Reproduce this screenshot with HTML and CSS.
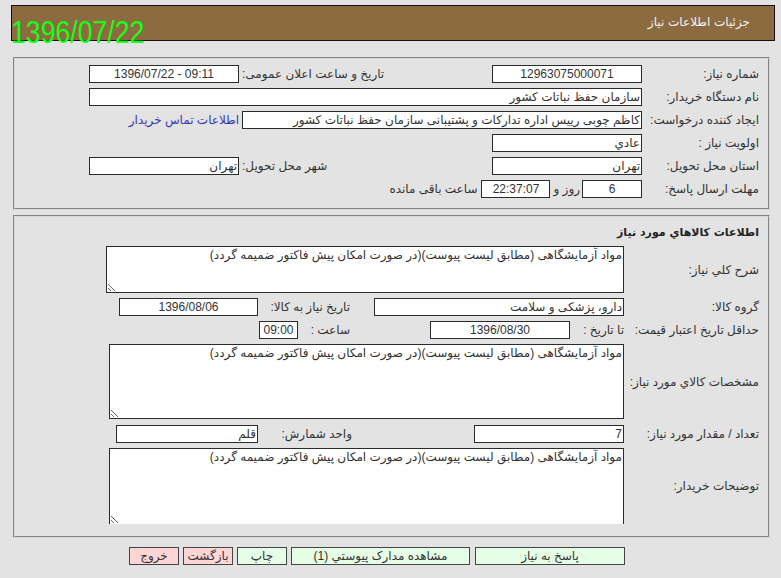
FILE: index.html
```html
<!DOCTYPE html>
<html lang="fa" dir="rtl">
<head>
<meta charset="utf-8">
<title>جزئیات اطلاعات نیاز</title>
<link rel="stylesheet" href="styles.css">
</head>
<body>
<div class="page">
  <div class="header">
    <span class="title">جزئیات اطلاعات نیاز</span>
  </div>
  <div class="stamp" dir="ltr">1396/07/22</div>

  <div class="panel p1">
    <div class="row">
      <div class="lbl">شماره نیاز:</div>
      <div class="box w150 c">12963075000071</div>
      <div class="lbl2">تاریخ و ساعت اعلان عمومی:</div>
      <div class="box w150 c" dir="ltr">1396/07/22 - 09:11</div>
    </div>
    <div class="row">
      <div class="lbl">نام دستگاه خریدار:</div>
      <div class="box w553">سازمان حفظ نباتات کشور</div>
    </div>
    <div class="row">
      <div class="lbl">ایجاد کننده درخواست:</div>
      <div class="box w400">کاظم چوبی رییس اداره تدارکات و پشتیبانی سازمان حفظ نباتات کشور</div>
      <a class="link" href="#">اطلاعات تماس خریدار</a>
    </div>
    <div class="row">
      <div class="lbl">اولویت نیاز :</div>
      <div class="box w150">عادي</div>
    </div>
    <div class="row">
      <div class="lbl">استان محل تحویل:</div>
      <div class="box w150">تهران</div>
      <div class="lbl2">شهر محل تحویل:</div>
      <div class="box w150">تهران</div>
    </div>
    <div class="row">
      <div class="lbl">مهلت ارسال پاسخ:</div>
      <div class="box w60 c">6</div>
      <span class="txt days">روز و</span>
      <div class="box w69 c">22:37:07</div>
      <span class="txt remain">ساعت باقی مانده</span>
    </div>
  </div>

  <div class="panel p2">
    <div class="heading">اطلاعات کالاهاي مورد نياز</div>
    <div class="row">
      <div class="lbl2col">شرح کلي نياز:</div>
      <textarea class="area a1" readonly>مواد آزمایشگاهی (مطابق لیست پیوست)(در صورت امکان پیش فاکتور ضمیمه گردد)</textarea>
    </div>
    <div class="row">
      <div class="lbl2col">گروه کالا:</div>
      <div class="box w250">دارو، پزشکی و سلامت</div>
      <div class="lbl3 need">تاریخ نیاز به کالا:</div>
      <div class="box w139 c">1396/08/06</div>
    </div>
    <div class="row">
      <div class="lbl2col">حداقل تاریخ اعتبار قیمت:</div>
      <span class="txt until">تا تاریخ :</span>
      <div class="box w140 c">1396/08/30</div>
      <span class="txt hour">ساعت :</span>
      <div class="box w39 c">09:00</div>
    </div>
    <div class="row">
      <div class="lbl2col">مشخصات کالاي مورد نياز:</div>
      <textarea class="area a2" readonly>مواد آزمایشگاهی (مطابق لیست پیوست)(در صورت امکان پیش فاکتور ضمیمه گردد)</textarea>
    </div>
    <div class="row r6">
      <div class="lbl2col">تعداد / مقدار مورد نیاز:</div>
      <div class="box w150">7</div>
      <div class="lbl3 unit">واحد شمارش:</div>
      <div class="box w142">قلم</div>
    </div>
    <div class="row">
      <div class="lbl2col">توضیحات خریدار:</div>
      <textarea class="area a3" readonly>مواد آزمایشگاهی (مطابق لیست پیوست)(در صورت امکان پیش فاکتور ضمیمه گردد)</textarea>
    </div>
  </div>

  <div class="buttons">
    <button class="btn green b150">پاسخ به نیاز</button>
    <button class="btn green b178">مشاهده مدارک پیوستي (1)</button>
    <button class="btn green b50">چاپ</button>
    <button class="btn pink b50">بازگشت</button>
    <button class="btn pink b50">خروج</button>
  </div>
</div>
</body>
</html>
```

FILE: styles.css
```css
html, body {
  margin: 0;
  padding: 0;
  background: #e3e3e3;
}
body {
  font-family: "Liberation Sans", "DejaVu Sans", sans-serif;
  font-size: 12px;
  color: #333;
}
.page {
  position: relative;
  padding-top: 5px;
}
.header {
  margin: 0 6px 0 11px;
  height: 34px;
  background: #8c6b40;
  border: 1px solid #111;
  display: flex;
  align-items: center;
  padding-right: 24px;
}
.title {
  font-family: "DejaVu Sans", sans-serif;
  color: #f3f3f3;
  font-size: 12px;
  margin-top: -2px;
}
.stamp {
  position: absolute;
  left: 11px;
  top: 17px;
  font-family: "Liberation Sans", sans-serif;
  font-size: 31px;
  line-height: 31px;
  color: #16ff16;
  transform: scaleX(0.86);
  transform-origin: left top;
}
.panel {
  margin: 0 11px 0 13px;
  border: 2px groove #d8d8d8;
  background: #e3e3e3;
  padding-right: 9px;
}
.p1 {
  margin-top: 16px;
  padding-top: 6px;
  padding-bottom: 10px;
  display: flex;
  flex-direction: column;
  gap: 5px;
}
.p2 {
  margin-top: 5px;
  padding-top: 8px;
  padding-bottom: 12px;
  display: flex;
  flex-direction: column;
  gap: 5px;
}
.row {
  display: flex;
  align-items: center;
}
.r6 {
  margin-top: 1px;
}
.lbl {
  flex: 0 0 117px;
  line-height: 18px;
  white-space: nowrap;
}
.lbl2 {
  flex: 0 0 250px;
  text-align: left;
  padding-left: 3px;
  white-space: nowrap;
}
.lbl2col {
  flex: 0 0 135px;
  white-space: nowrap;
}
.lbl3 {
  white-space: nowrap;
}
.need {
  flex: 0 0 116px;
  padding-right: 24px;
  box-sizing: border-box;
}
.unit {
  flex: 0 0 216px;
  padding-right: 122px;
  box-sizing: border-box;
}
.box {
  box-sizing: border-box;
  height: 18px;
  line-height: 16px;
  background: #fff;
  border: 1px solid #2a2a2a;
  padding: 0 1px;
  white-space: nowrap;
  overflow: hidden;
  color: #333;
}
.c { text-align: center; }
.w150 { width: 150px; }
.w553 { width: 553px; }
.w400 { width: 400px; }
.w60 { width: 60px; }
.w69 { width: 69px; }
.w250 { width: 250px; }
.w139 { width: 139px; }
.w140 { width: 140px; }
.w39 { width: 39px; }
.w142 { width: 142px; }
.link {
  color: #3535b5;
  text-decoration: none;
  margin-right: 3px;
  white-space: nowrap;
}
.txt { white-space: nowrap; }
.days { margin: 0 2px 0 3px; }
.remain { margin-right: 4px; }
.until { flex: 0 0 54px; }
.hour { flex: 0 0 132px; padding-right: 80px; box-sizing: border-box; }
.heading {
  font-family: "DejaVu Sans", sans-serif;
  font-weight: bold;
  font-size: 11px;
  line-height: 16px;
  color: #222;
}
.area {
  box-sizing: border-box;
  font-family: "Liberation Sans", "DejaVu Sans", sans-serif;
  font-size: 12px;
  color: #333;
  background: #fff;
  border: 1px solid #2a2a2a;
  padding: 1px 1px;
  margin: 0;
  line-height: 14px;
  overflow: hidden;
}
.a1 { width: 518px; height: 47px; }
.a2 { width: 515px; height: 75px; }
.a3 { width: 515px; height: 76px; border-bottom: none; }
.buttons {
  display: flex;
  gap: 4px;
  margin: 9px 156px 0 0;
}
.btn {
  box-sizing: border-box;
  height: 18px;
  font-family: "Liberation Sans", "DejaVu Sans", sans-serif;
  font-size: 12px;
  color: #333;
  border: 1px solid #444;
  padding: 0;
  line-height: 16px;
}
.green { background: #e6fde6; }
.pink { background: #ffd6d6; }
.b150 { width: 150px; margin-left: 1px; }
.b178 { width: 179px; }
.b50 { width: 50px; }
```
